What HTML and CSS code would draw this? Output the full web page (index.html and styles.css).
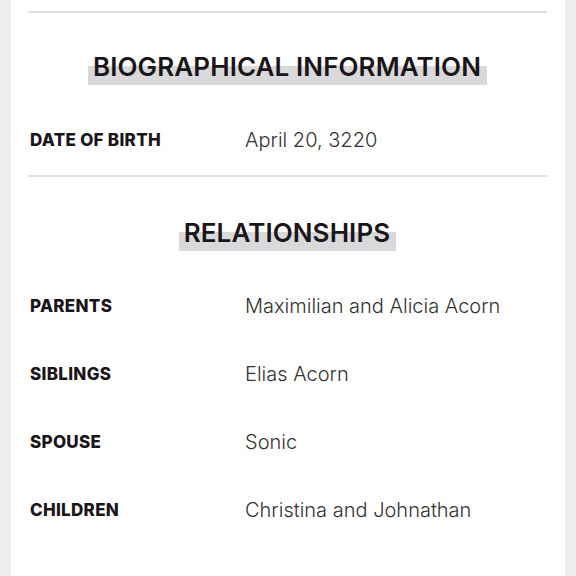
FILE: index.html
```html
<!DOCTYPE html>
<html>
<head>
<meta charset="utf-8">
<link rel="stylesheet" href="styles.css">
</head>
<body>
<div class="card">
  <div class="divider"></div>
  <h2 class="section-title"><span class="mark">BIOGRAPHICAL INFORMATION</span></h2>
  <div class="row"><div class="label">DATE OF BIRTH</div><div class="value">April 20, 3220</div></div>
  <div class="divider gap"></div>
  <h2 class="section-title second"><span class="mark">RELATIONSHIPS</span></h2>
  <div class="row"><div class="label">PARENTS</div><div class="value">Maximilian and Alicia Acorn</div></div>
  <div class="row"><div class="label">SIBLINGS</div><div class="value">Elias Acorn</div></div>
  <div class="row"><div class="label">SPOUSE</div><div class="value">Sonic</div></div>
  <div class="row"><div class="label">CHILDREN</div><div class="value">Christina and Johnathan</div></div>
</div>
</body>
</html>
```
FILE: styles.css
```css
html, body {
  margin: 0;
  padding: 0;
  background: #eeedef;
}
body {
  font-family: "Inter", "Roboto", sans-serif;
  color: #1a1519;
}
.card {
  margin: 0 11px;
  background: #fff;
  min-height: 576px;
  padding: 11px 18px 0 17px;
  box-sizing: border-box;
}
.divider {
  height: 2px;
  background: #e0e0e0;
}
.divider.gap {
  margin-top: 1px;
}
.section-title {
  margin: 38px 0 21px;
  text-align: center;
  font-size: 26px;
  font-weight: 600;
  line-height: 32px;
  letter-spacing: 0.1px;
}
.section-title.second {
  margin-top: 40px;
}
.mark {
  display: inline-block;
  line-height: 26px;
  padding: 0 6px 5px 5px;
  background: linear-gradient(to bottom, transparent 0, transparent 38%, #d9d8da 38%, #d9d8da 100%);
}
.row {
  display: grid;
  grid-template-columns: 215px 1fr;
  align-items: center;
  height: 68px;
  padding-left: 2px;
}
.label {
  font-size: 17px;
  font-weight: 800;
  letter-spacing: 0.3px;
}
.value {
  font-size: 20px;
  font-weight: 300;
  color: #333;
}
```
